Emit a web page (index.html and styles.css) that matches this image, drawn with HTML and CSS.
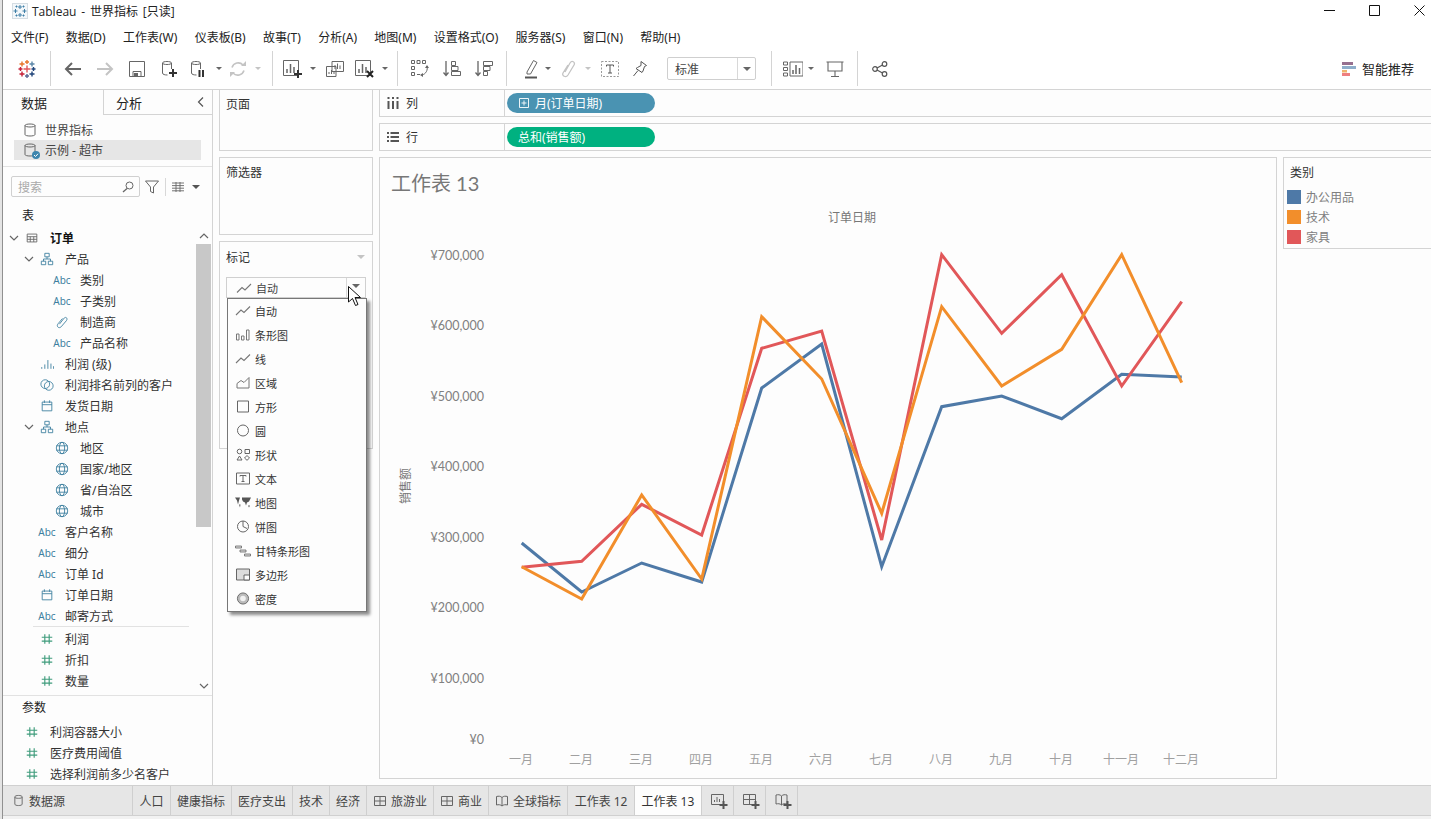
FILE: index.html
```html
<!DOCTYPE html>
<html lang="zh-CN">
<head>
  <meta charset="UTF-8">
  <title>Tableau - 世界指标 [只读]</title>
  <link rel="stylesheet" href="styles.css">
</head>
<body>
<svg class="defs" aria-hidden="true">
  <symbol id="db" viewBox="0 0 16 16"><path d="M3 3.5C3 1.5 13 1.5 13 3.5V12.5C13 14.5 3 14.5 3 12.5ZM3 3.5C3 5.5 13 5.5 13 3.5" fill="none" stroke="currentColor"/></symbol>
  <symbol id="hier" viewBox="0 0 16 16"><path d="M5.5 1.5h5v4h-5zM1.5 10.5h5v4h-5zM9.5 10.5h5v4h-5zM8 5.5v2.5M4 10.500v-2.500h8v2.500" fill="none" stroke="#3d7f9f"/></symbol>
  <symbol id="clip" viewBox="0 0 16 16"><path d="M5 10.500L10.500 3.500C12.500 1.500 15 4 13 6.500L7 13.500C4.500 16 1 13 3.500 10L8.500 4" fill="none" stroke="#3d7f9f"/></symbol>
  <symbol id="cal" viewBox="0 0 16 16"><path d="M2.500 3.500h11v10h-11zM2.500 6.500h11M5 1.500v3M11 1.500v3" fill="none" stroke="#3d7f9f"/></symbol>
  <symbol id="globe" viewBox="0 0 16 16"><g fill="none" stroke="#3d7f9f"><circle cx="8" cy="8" r="6.500"/><ellipse cx="8" cy="8" rx="3" ry="6.500"/><path d="M1.500 5.500h13M1.500 10.500h13"/></g></symbol>
  <symbol id="hash" viewBox="0 0 16 16"><path d="M5.500 2.500v11M10.500 2.500v11M2 6h12M2 10.500h12" fill="none" stroke="#3f9c7c" stroke-width="1.300"/></symbol>
  <symbol id="bars" viewBox="0 0 16 16"><path d="M2 13.500v-2M5.500 13.500v-5M9 13.500v-10M12.500 13.500v-6M15.500 13.500v-3" fill="none" stroke="#3d7f9f"/></symbol>
  <symbol id="sets" viewBox="0 0 16 16"><g fill="none" stroke="#3d7f9f"><circle cx="6" cy="7" r="5"/><circle cx="10" cy="9" r="5"/></g></symbol>
  <symbol id="chev" viewBox="0 0 12 12"><path d="M2 4l4 4 4-4" fill="none" stroke="#666" stroke-width="1.200"/></symbol>
  <symbol id="table" viewBox="0 0 16 16"><path d="M2.500 3.500h11v9h-11zM2.500 6.500h11M2.500 9.500h11M6 6.500v6M10 6.500v6" fill="none" stroke="#666"/></symbol>
  <symbol id="grid" viewBox="0 0 14 14"><path d="M1.500 2.500h11v9h-11zM7 2.500v9M1.500 7h11" fill="none" stroke="#666"/></symbol>
  <symbol id="book" viewBox="0 0 14 14"><path d="M7 3.500C5.500 2 3.500 2 1.500 2.500V11C3.500 10.500 5.500 10.500 7 12C8.500 10.500 10.500 10.500 12.500 11V2.500C10.500 2 8.500 2 7 3.500ZM7 3.500V12" fill="none" stroke="#666"/></symbol>
  <symbol id="line" viewBox="0 0 16 12"><path d="M1 10.500L6 5.500L9 8L15 2" fill="none" stroke="#777" stroke-width="1.100"/></symbol>
</svg>

<div class="window">
  <div class="titlebar">
    <svg class="app-logo" viewBox="0 0 16 16"><rect x="0.500" y="0.500" width="15" height="15" fill="#f3f7fa" stroke="#d5dde3"/><path d="M8 2v4M6 4h4M8 10v4M6 12h4M3.500 6v4M1.500 8h4M12.500 6v4M10.500 8h4M4.500 2.500v2M3.500 3.500h2M11.500 2.500v2M10.500 3.500h2M4.500 11.500v2M3.500 12.500h2M11.500 11.500v2M10.500 12.500h2" stroke="#3f7fa6"/></svg>
    <span class="app-title">Tableau - 世界指标 [只读]</span>
    <div class="win-ctrl">
      <svg viewBox="0 0 11 11"><path d="M0 5.500h11" stroke="#111"/></svg>
      <svg viewBox="0 0 11 11"><path d="M.5.500h10v10H.5z" fill="none" stroke="#111"/></svg>
      <svg viewBox="0 0 11 11"><path d="M.5.500l10 10M10.500.500l-10 10" stroke="#111"/></svg>
    </div>
  </div>

  <div class="menubar">
    <span>文件(F)</span><span>数据(D)</span><span>工作表(W)</span><span>仪表板(B)</span><span>故事(T)</span><span>分析(A)</span><span>地图(M)</span><span>设置格式(O)</span><span>服务器(S)</span><span>窗口(N)</span><span>帮助(H)</span>
  </div>

  <div class="toolbar">
    <div class="tool logo w24">
      <svg viewBox="0 0 18 18" width="18" height="18"><g stroke-width="1.400"><path d="M4 1.500v5M1.500 4h5" stroke="#e8762b"/><path d="M9 0v4M7 2h4" stroke="#e8762b"/><path d="M14 1.500v5M11.500 4h5" stroke="#5b87a8"/><path d="M2.500 7v4M.5 9h4" stroke="#c72037"/><path d="M9 5.500v7M5.500 9h7" stroke="#e15759"/><path d="M15.500 7v4M13.500 9h4" stroke="#1f447a"/><path d="M4 11.500v5M1.500 14h5" stroke="#c72037"/><path d="M9 14v4M7 16h4" stroke="#5b6591"/><path d="M14 11.500v5M11.500 14h5" stroke="#1f447a"/></g></svg>
    </div>
    <i class="sep"></i>
    <div class="tool w32"><svg viewBox="0 0 18 16" width="18" height="16"><path d="M17 8H2M8 2L2 8l6 6" fill="none" stroke="#666" stroke-width="2"/></svg></div>
    <div class="tool w32"><svg viewBox="0 0 18 16" width="18" height="16"><path d="M1 8h15M10 2l6 6-6 6" fill="none" stroke="#c4c4c4" stroke-width="2"/></svg></div>
    <div class="tool w32"><svg viewBox="0 0 16 16" width="16" height="16"><path d="M.5.500h15v15H.5zM4 15.500V10.500h8v5" fill="none" stroke="#666"/><path d="M5 12h4v3H5z" fill="#666"/></svg></div>
    <div class="tool w31"><svg viewBox="0 0 16 18" width="16" height="18"><path d="M1.500 3C1.500 1 10.500 1 10.500 3V9M1.500 3V13C1.500 14.500 4 15 6.500 15M1.500 3C1.500 5 10.500 5 10.500 3" fill="none" stroke="#666"/><path d="M12 9v8M8 13h8" stroke="#333" stroke-width="2"/></svg></div>
    <div class="tool w28"><svg viewBox="0 0 16 18" width="16" height="18"><path d="M1.500 3C1.500 1 10.500 1 10.500 3V9M1.500 3V13C1.500 14.500 4 15 6.500 15M1.500 3C1.500 5 10.500 5 10.500 3" fill="none" stroke="#666"/><path d="M9.500 10v7M13 10v7" stroke="#333" stroke-width="2"/></svg></div>
    <div class="caret-box w14"><i class="caret"></i></div>
    <div class="tool w24"><svg viewBox="0 0 18 18" width="18" height="18"><path d="M3 7.500A6.500 6.500 0 0 1 14 5M15 10.500A6.500 6.500 0 0 1 4 13" fill="none" stroke="#c4c4c4" stroke-width="1.600"/><path d="M12 6h5V1zM6 12H1v5z" fill="#c4c4c4"/></svg></div>
    <div class="caret-box w16"><i class="caret off"></i></div>
    <i class="sep"></i>
    <div class="tool w28"><svg viewBox="0 0 20 18" width="20" height="18"><path d="M.5.500h15v15H.5z" fill="none" stroke="#666"/><path d="M4 13V9M7.500 13V4M11 13V7" stroke="#666" stroke-width="1.500"/><path d="M15 10v8M11 14h8" stroke="#333" stroke-width="2"/></svg></div>
    <div class="caret-box w12"><i class="caret"></i></div>
    <div class="tool w32"><svg viewBox="0 0 18 16" width="18" height="16"><path d="M6 .500h11.500v10H6zM.5 5.500H10v10H.5z" fill="#fdfdfd" stroke="#666"/><path d="M9 8V4M11.500 8V2.500M14 8V4.500M3 13v-2M5.500 13V9M8 13v-2" stroke="#666"/></svg></div>
    <div class="tool w28"><svg viewBox="0 0 20 18" width="20" height="18"><path d="M.5.500h15v15H.5z" fill="none" stroke="#666"/><path d="M4 13V9M7.500 13V4M11 13V7" stroke="#666" stroke-width="1.500"/><path d="M12 11l6 6M18 11l-6 6" stroke="#222" stroke-width="2"/></svg></div>
    <div class="caret-box w12"><i class="caret"></i></div>
    <i class="sep"></i>
    <div class="tool w32"><svg viewBox="0 0 18 18" width="18" height="18"><path d="M.5.500h3v3h-3zM6 .500h3v3H6zM11.500.500h3v3h-3zM.5 6.500h3v3h-3zM.5 12.500h3v3h-3zM6 14.500h3" fill="none" stroke="#666"/><path d="M16 6c1 4-1 8-5 9" fill="none" stroke="#666"/><path d="M14 8l2-3 2 3zM12 13l-3 2 3 2z" fill="#666"/></svg></div>
    <div class="tool w32"><svg viewBox="0 0 18 18" width="18" height="18"><path d="M3 1v14M.5 12.500L3 15.500l2.500-3" fill="none" stroke="#666" stroke-width="1.300"/><path d="M8.500 1.500h4v4h-4zM8.500 6.500h6.500v4H8.500zM8.500 11.500h9v4h-9z" fill="none" stroke="#666"/></svg></div>
    <div class="tool w32"><svg viewBox="0 0 18 18" width="18" height="18"><path d="M3 1v14M.5 12.500L3 15.500l2.500-3" fill="none" stroke="#666" stroke-width="1.300"/><path d="M8.500 1.500h9v4h-9zM8.500 6.500h6.500v4H8.500zM8.500 11.500h4v4h-4z" fill="none" stroke="#666"/></svg></div>
    <i class="sep"></i>
    <div class="tool w24 hl"><svg viewBox="0 0 14 20" width="14" height="20"><path d="M3 13L9.500 1.500 13 3.500 6.500 15H3z" fill="none" stroke="#666"/><path d="M1 18.500h12" stroke="#555" stroke-width="2"/></svg></div>
    <div class="caret-box w10"><i class="caret"></i></div>
    <div class="tool w30"><svg viewBox="0 0 16 18" width="16" height="18"><path d="M5 12L10 3C12 0 15.500 2 14 5L8 15C6 18 1.500 16 3 13L8 5" fill="none" stroke="#c4c4c4" stroke-width="1.300"/></svg></div>
    <div class="caret-box w10"><i class="caret off"></i></div>
    <div class="tool w34"><svg viewBox="0 0 18 16" width="18" height="16"><path d="M.5.500h17v15H.5z" fill="none" stroke="#999" stroke-dasharray="2 1.500"/><path d="M5.500 5.500V4h7v1.500M9 4v8M7 12h4" fill="none" stroke="#555"/></svg></div>
    <div class="tool w26"><svg viewBox="0 0 14 16" width="14" height="16"><path d="M8 .500l5.500 4-2 1-1.500 4.500-1 1.500L3 7.500 4.500 6.500 8 4.500zM5 9.500L.5 15" fill="none" stroke="#555"/></svg></div>
    <div class="combo"><span>标准</span><b><i class="caret"></i></b></div>
    <i class="sep"></i>
    <div class="tool w20 show"><svg viewBox="0 0 20 16" width="20" height="16"><path d="M.5 1h4v3h-4zM.5 6.500h4v3h-4zM.5 12h4v3h-4zM7 1h13v14H7z" fill="none" stroke="#666"/><path d="M10 13V9M13 13V4M16.500 13V7" stroke="#666" stroke-width="1.500"/></svg></div>
    <div class="caret-box w16"><i class="caret"></i></div>
    <div class="tool w32"><svg viewBox="0 0 18 16" width="18" height="16"><path d="M.5 1h17M2 1v9h14V1M9 10v5M5 15.500h8" fill="none" stroke="#666" stroke-width="1.100"/></svg></div>
    <i class="sep"></i>
    <div class="tool w20 share"><svg viewBox="0 0 16 16" width="16" height="16"><g fill="none" stroke="#555" stroke-width="1.200"><circle cx="3" cy="8" r="2.300"/><circle cx="12.500" cy="3" r="2.300"/><circle cx="12.500" cy="13" r="2.300"/><path d="M5 7l5.500-3M5 9l5.500 3"/></g></svg></div>
    <div class="recommend">
      <svg viewBox="0 0 14 14" width="14" height="14"><path d="M0 0h11v3H0z" fill="#96708f"/><path d="M0 4h14v3H0z" fill="#8eaecb"/><path d="M0 8h5v2.500H0z" fill="#f0b36b"/><path d="M0 11h8v3H0z" fill="#ee7f80"/></svg>
      <span>智能推荐</span>
    </div>
  </div>

  <div class="main">
    <aside class="sidebar">
      <div class="side-tabs">
        <div class="side-tab on">数据</div>
        <div class="side-tab">分析<svg class="collapse" viewBox="0 0 8 12"><path d="M6 1.500L1.500 6 6 10.500" fill="none" stroke="#555" stroke-width="1.200"/></svg></div>
      </div>
      <div class="sources">
        <div class="source"><svg class="ico16 grey"><use href="#db"/></svg>世界指标</div>
        <div class="source on">
          <span class="db-wrap"><svg class="ico16 grey"><use href="#db"/></svg><svg class="tick" viewBox="0 0 8 8"><circle cx="4" cy="4" r="4" fill="#3d85ad"/><path d="M2 4l1.500 1.500L6 2.800" fill="none" stroke="#fff"/></svg></span>示例 - 超市
        </div>
      </div>
      <div class="search-row">
        <div class="search">
          <span>搜索</span>
          <svg viewBox="0 0 12 12" width="12" height="12"><circle cx="7.500" cy="4.500" r="3.500" fill="none" stroke="#666"/><path d="M5 7.500L1 11" stroke="#666" stroke-width="1.300"/></svg>
        </div>
        <svg class="funnel" viewBox="0 0 14 14" width="14" height="14"><path d="M.5 1h13L8.500 7v6L5.500 11.500V7z" fill="none" stroke="#666"/></svg>
        <i class="mini-sep"></i>
        <svg class="lines" viewBox="0 0 12 10" width="12" height="10"><path d="M0 1h12M0 3.600h12M0 6.200h12M0 8.800h12M4 0v10M8 0v10" stroke="#666" stroke-width=".9"/></svg>
        <i class="caret dark"></i>
      </div>
      <div class="heading">表</div>

      <div class="fields">
        <div class="row"><svg class="chev"><use href="#chev"/></svg><svg class="ico"><use href="#table"/></svg><b>订单</b></div>
        <div class="row l1"><svg class="chev"><use href="#chev"/></svg><svg class="ico"><use href="#hier"/></svg>产品</div>
        <div class="row l2"><span class="slot"></span><span class="abc">Abc</span>类别</div>
        <div class="row l2"><span class="slot"></span><span class="abc">Abc</span>子类别</div>
        <div class="row l2"><span class="slot"></span><svg class="ico"><use href="#clip"/></svg>制造商</div>
        <div class="row l2"><span class="slot"></span><span class="abc">Abc</span>产品名称</div>
        <div class="row l1"><span class="slot"></span><svg class="ico"><use href="#bars"/></svg>利润 (级)</div>
        <div class="row l1"><span class="slot"></span><svg class="ico"><use href="#sets"/></svg>利润排名前列的客户</div>
        <div class="row l1"><span class="slot"></span><svg class="ico"><use href="#cal"/></svg>发货日期</div>
        <div class="row l1"><svg class="chev"><use href="#chev"/></svg><svg class="ico"><use href="#hier"/></svg>地点</div>
        <div class="row l2"><span class="slot"></span><svg class="ico"><use href="#globe"/></svg>地区</div>
        <div class="row l2"><span class="slot"></span><svg class="ico"><use href="#globe"/></svg>国家/地区</div>
        <div class="row l2"><span class="slot"></span><svg class="ico"><use href="#globe"/></svg>省/自治区</div>
        <div class="row l2"><span class="slot"></span><svg class="ico"><use href="#globe"/></svg>城市</div>
        <div class="row l1"><span class="slot"></span><span class="abc">Abc</span>客户名称</div>
        <div class="row l1"><span class="slot"></span><span class="abc">Abc</span>细分</div>
        <div class="row l1"><span class="slot"></span><span class="abc">Abc</span>订单 Id</div>
        <div class="row l1"><span class="slot"></span><svg class="ico"><use href="#cal"/></svg>订单日期</div>
        <div class="row l1"><span class="slot"></span><span class="abc">Abc</span>邮寄方式</div>
        <div class="field-sep"></div>
        <div class="row l1"><span class="slot"></span><svg class="ico"><use href="#hash"/></svg>利润</div>
        <div class="row l1"><span class="slot"></span><svg class="ico"><use href="#hash"/></svg>折扣</div>
        <div class="row l1"><span class="slot"></span><svg class="ico"><use href="#hash"/></svg>数量</div>
        <div class="scroll">
          <svg class="chev up"><use href="#chev"/></svg>
          <div class="track"><div class="thumb"></div></div>
          <svg class="chev"><use href="#chev"/></svg>
        </div>
      </div>

      <div class="params">
        <div class="params-head">参数</div>
        <div class="row"><span class="slot"></span><svg class="ico"><use href="#hash"/></svg>利润容器大小</div>
        <div class="row"><span class="slot"></span><svg class="ico"><use href="#hash"/></svg>医疗费用阈值</div>
        <div class="row"><span class="slot"></span><svg class="ico"><use href="#hash"/></svg>选择利润前多少名客户</div>
      </div>
    </aside>

    <div class="cards">
      <div class="card pages">页面</div>
      <div class="card filters">筛选器</div>
      <div class="card marks">
        <div class="marks-head">标记<i class="caret off"></i></div>
        <div class="mark-select">
          <svg class="mark-ico"><use href="#line"/></svg><span>自动</span><b><i class="caret"></i></b>
        </div>
        <div class="mark-menu">
          <div class="mark-item"><svg class="mark-ico"><use href="#line"/></svg>自动</div>
          <div class="mark-item"><svg class="mark-ico" viewBox="0 0 16 12"><path d="M1.500 5.500h2.500v6H1.500zM6.500 7.500h2.500v4H6.500zM11.500 1.500h2.500v10h-2.500z" fill="none" stroke="#777"/></svg>条形图</div>
          <div class="mark-item"><svg class="mark-ico"><use href="#line"/></svg>线</div>
          <div class="mark-item"><svg class="mark-ico" viewBox="0 0 16 12"><path d="M2 11.500V7L6 4L9 6L14 1V11.500Z" fill="none" stroke="#777"/></svg>区域</div>
          <div class="mark-item"><svg class="mark-ico" viewBox="0 0 16 12"><path d="M2.500.500h11v11h-11z" fill="none" stroke="#666"/></svg>方形</div>
          <div class="mark-item"><svg class="mark-ico" viewBox="0 0 16 12"><circle cx="8" cy="6" r="5.500" fill="none" stroke="#666"/></svg>圆</div>
          <div class="mark-item"><svg class="mark-ico" viewBox="0 0 16 12"><g fill="none" stroke="#666"><circle cx="4.500" cy="3" r="2.300"/><path d="M10 1h4.500v4H10zM4.500 7.500L7 11.500H2zM12 7l2.500 2.500L12 11.800 9.500 9.500z"/></g></svg>形状</div>
          <div class="mark-item"><svg class="mark-ico" viewBox="0 0 16 12"><path d="M1.500.500h13v11h-13z" fill="none" stroke="#666"/><path d="M5 4V3h6v1M8 3v6M6.500 9h3" fill="none" stroke="#666"/></svg>文本</div>
          <div class="mark-item"><svg class="mark-ico" viewBox="0 0 16 12"><path d="M0 1h5L4 4 3 8 2 4zM7 1h9l-2 4-2 1-1 3-1-3-2-1-1-2z" fill="#555"/><path d="M4 8l1 3 .5-3zM13 9h2l-1 2z" fill="#555"/></svg>地图</div>
          <div class="mark-item"><svg class="mark-ico" viewBox="0 0 16 12"><circle cx="8" cy="6" r="5.500" fill="none" stroke="#666"/><path d="M8 6V.500M8 6l4 2" fill="none" stroke="#666"/></svg>饼图</div>
          <div class="mark-item"><svg class="mark-ico" viewBox="0 0 16 12"><path d="M.5 1.500h6v2h-6zM5 5.500h6v2H5zM9.500 9.500h6v2h-6z" fill="#ddd" stroke="#666" stroke-width=".8"/></svg>甘特条形图</div>
          <div class="mark-item"><svg class="mark-ico" viewBox="0 0 16 12"><path d="M1.500.500h13v11h-13z" fill="#ddd" stroke="#666"/><path d="M9 11.500V6.500h5.500v5z" fill="#fdfdfd" stroke="#666"/></svg>多边形</div>
          <div class="mark-item"><svg class="mark-ico" viewBox="0 0 16 14"><circle cx="8" cy="7" r="6" fill="#bbb" stroke="#666"/><circle cx="8" cy="7" r="3" fill="#f1f1f1"/></svg>密度</div>
        </div>
        <svg class="cursor" viewBox="0 0 14 21" width="14" height="21"><path d="M.5.500V16L4.500 12.500 7.500 19.500 10 18.500 7 11.500 12.500 11.500Z" fill="#fff" stroke="#111"/></svg>
      </div>
    </div>

    <div class="work">
      <div class="shelf first">
        <div class="shelf-label"><svg viewBox="0 0 12 12" width="12" height="12"><path d="M1.500 4v8M6 4v8M10.500 4v8" stroke="#555" stroke-width="2"/><path d="M1.500 0v2M6 0v2M10.500 0v2" stroke="#555" stroke-width="2"/></svg><span>列</span></div>
        <div class="pill blue"><svg viewBox="0 0 10 10" width="10" height="10"><path d="M.5.500h9v9h-9zM5 2.500v5M2.500 5h5" fill="none" stroke="#fff" stroke-width=".9"/></svg>月(订单日期)</div>
      </div>
      <div class="shelf">
        <div class="shelf-label"><svg viewBox="0 0 12 12" width="12" height="12"><path d="M0 2h2M3.500 2H12M0 6h2M3.500 6H12M0 10h2M3.500 10H12" stroke="#555" stroke-width="1.800"/></svg><span>行</span></div>
        <div class="pill green">总和(销售额)</div>
      </div>

      <div class="view">
        <div class="sheet">
          <h2 class="sheet-title">工作表 13</h2>
          <svg class="chart" viewBox="0 0 896 577" width="896" height="577">
            <text class="ax-title" x="472" y="22" text-anchor="middle">订单日期</text>
            <text class="ax-title" transform="translate(30 286) rotate(-90)" text-anchor="middle">销售额</text>
            <g class="ax-y" text-anchor="end">
              <text x="104" y="60">¥700,000</text>
              <text x="104" y="130">¥600,000</text>
              <text x="104" y="201">¥500,000</text>
              <text x="104" y="271">¥400,000</text>
              <text x="104" y="342">¥300,000</text>
              <text x="104" y="412">¥200,000</text>
              <text x="104" y="483">¥100,000</text>
              <text x="104" y="544">¥0</text>
            </g>
            <g class="ax-x" text-anchor="middle">
              <text x="141" y="564">一月</text><text x="201" y="564">二月</text><text x="261" y="564">三月</text><text x="321" y="564">四月</text><text x="381" y="564">五月</text><text x="441" y="564">六月</text><text x="501" y="564">七月</text><text x="561" y="564">八月</text><text x="621" y="564">九月</text><text x="681" y="564">十月</text><text x="741" y="564">十一月</text><text x="801" y="564">十二月</text>
            </g>
            <polyline class="s" stroke="#4e79a7" points="141.700,343 201.700,392 261.700,363 321.700,382 381.700,188 441.700,144 501.700,366.700 561.700,206.700 621.700,196 681.700,218.700 741.700,174.300 801.700,177"/>
            <polyline class="s" stroke="#e15759" points="141.700,367.300 201.700,361.300 261.700,304.300 321.700,335 381.700,148.300 441.700,131 501.700,340 561.700,54.700 621.700,133.300 681.700,74.700 741.700,186 801.700,101.700"/>
            <polyline class="s" stroke="#f28e2b" points="141.700,366.700 201.700,399 261.700,295 321.700,379 381.700,116.700 441.700,179 501.700,313.300 561.700,106.700 621.700,186 681.700,149.300 741.700,54.700 801.700,182.700"/>
          </svg>
        </div>
        <div class="legend">
          <div class="legend-title">类别</div>
          <div class="legend-item"><i class="swatch c1"></i>办公用品</div>
          <div class="legend-item"><i class="swatch c2"></i>技术</div>
          <div class="legend-item"><i class="swatch c3"></i>家具</div>
        </div>
      </div>
    </div>
  </div>

  <div class="tabs">
    <div class="tab src"><svg viewBox="0 0 12 14" width="11" height="13"><path d="M2 3C2 1 10 1 10 3V11C10 13 2 13 2 11ZM2 3.500C2 5 10 5 10 3.500" fill="none" stroke="#666"/></svg>数据源</div>
    <div class="tab wide">人口</div>
    <div class="tab">健康指标</div>
    <div class="tab">医疗支出</div>
    <div class="tab">技术</div>
    <div class="tab">经济</div>
    <div class="tab"><svg class="tab-ico"><use href="#grid"/></svg>旅游业</div>
    <div class="tab"><svg class="tab-ico"><use href="#grid"/></svg>商业</div>
    <div class="tab"><svg class="tab-ico"><use href="#book"/></svg>全球指标</div>
    <div class="tab wide">工作表 12</div>
    <div class="tab wide on">工作表 13</div>
    <div class="tab add"><svg viewBox="0 0 18 16" width="18" height="16"><path d="M.5 1.500h12v10H.5z" fill="none" stroke="#666"/><path d="M3.500 9V7M6 9V4M8.500 9V6" stroke="#666"/><path d="M12.500 8v8M8.500 12h8" stroke="#555" stroke-width="2"/></svg></div>
    <div class="tab add"><svg viewBox="0 0 18 16" width="18" height="16"><path d="M.5 1.500h12v10H.5zM6.500 1.500v10M.5 6.500h12" fill="none" stroke="#666"/><path d="M12.500 8v8M8.500 12h8" stroke="#555" stroke-width="2"/></svg></div>
    <div class="tab add"><svg viewBox="0 0 18 16" width="18" height="16"><path d="M6.500 3C5 1.500 3 1.500 1 2V11C3 10.500 5 10.500 6.500 12C8 10.500 10 10.500 12 11V2C10 1.500 8 1.500 6.500 3ZM6.500 3V12" fill="none" stroke="#666"/><path d="M12.500 8v8M8.500 12h8" stroke="#555" stroke-width="2"/></svg></div>
  </div>
  <div class="statusbar"></div>
</div>
</body>
</html>
```

FILE: styles.css
```css
* {
  box-sizing: border-box;
}
html, body {
  margin: 0;
  padding: 0;
  height: 100%;
  overflow: hidden;
}
body {
  font-family: "Noto Sans", "Noto Sans CJK SC", sans-serif;
  font-size: 12px;
  color: #333;
  background: #e4e4e4;
  border-left: 2px solid #e4e4e4;
}
i {
  display: block;
  font-style: normal;
}
.defs {
  position: absolute;
  width: 0;
  height: 0;
}
.window {
  height: 819px;
  display: flex;
  flex-direction: column;
  background: #fdfdfd;
  border-left: 1px solid #909090;
}

/* title + menu */
.titlebar {
  height: 24px;
  flex: none;
  display: flex;
  align-items: center;
  padding: 0 6px 3px 9px;
  background: #fff;
}
.app-logo {
  width: 16px;
  height: 16px;
}
.app-title {
  margin-left: 4px;
  color: #222;
  word-spacing: 1.7px;
  font-family: "Open Sans", "Noto Sans CJK SC", sans-serif;
}
.win-ctrl {
  margin-left: auto;
  display: flex;
  gap: 34px;
}
.win-ctrl svg {
  width: 11px;
  height: 11px;
}
.menubar {
  height: 26px;
  flex: none;
  display: flex;
  align-items: center;
  gap: 17.3px;
  padding-left: 8px;
  background: #fff;
  color: #222;
}

/* toolbar */
.toolbar {
  height: 40px;
  flex: none;
  display: flex;
  align-items: center;
  padding: 0 0 2px 12px;
  border-bottom: 1px solid #d4d4d4;
  background: #fff;
}
.tool, .caret-box {
  height: 24px;
  flex: none;
  display: flex;
  align-items: center;
  justify-content: center;
}
.w10 { width: 10px; }
.w12 { width: 12px; }
.w14 { width: 14px; }
.w16 { width: 16px; }
.w20 { width: 20px; }
.w24 { width: 24px; }
.w26 { width: 26px; }
.w28 { width: 28px; }
.w30 { width: 30px; }
.w31 { width: 31px; }
.w32 { width: 32px; }
.w34 { width: 34px; }
.logo { margin-right: 5px; }
.hl { margin-left: 6px; }
.show { margin-left: 5px; }
.share { margin-left: 6px; }
.sep {
  width: 1px;
  height: 35px;
  flex: none;
  margin: 0 6px;
  background: #d4d4d4;
}
.caret {
  width: 0;
  height: 0;
  border-left: 4px solid transparent;
  border-right: 4px solid transparent;
  border-top: 4px solid #666;
}
.caret-box .caret {
  border-left-width: 3px;
  border-right-width: 3px;
  border-top-width: 3px;
}
.caret.off {
  border-top-color: #c4c4c4;
}
.caret.dark {
  border-top-color: #555;
}
.combo {
  width: 89px;
  height: 23px;
  margin: 0 9px 0 14px;
  flex: none;
  display: flex;
  align-items: center;
  border: 1px solid #cfcfcf;
  border-radius: 2px;
}
.combo span {
  flex: 1;
  padding-left: 7px;
  color: #444;
}
.combo b {
  width: 18px;
  height: 100%;
  display: flex;
  align-items: center;
  justify-content: center;
  border-left: 1px solid #d8d8d8;
}
.recommend {
  margin-left: auto;
  margin-right: 17px;
  display: flex;
  align-items: center;
  gap: 6px;
  font-size: 13px;
  color: #222;
}

/* main area */
.main {
  flex: 1;
  min-height: 0;
  display: flex;
}
.sidebar {
  width: 210px;
  flex: none;
  display: flex;
  flex-direction: column;
  border-right: 1px solid #d4d4d4;
}
.side-tabs {
  height: 25px;
  flex: none;
  display: flex;
}
.side-tab {
  position: relative;
  flex: 1;
  padding: 3px 0 0 12px;
  font-size: 13px;
  color: #222;
  border-left: 1px solid #d4d4d4;
  border-bottom: 1px solid #d4d4d4;
}
.side-tab.on {
  flex: none;
  width: 100px;
  padding-left: 18px;
  border: none;
}
.collapse {
  position: absolute;
  right: 7px;
  top: 6px;
  width: 8px;
  height: 12px;
}
.sources {
  padding: 5px 11px 6px 11px;
  border-bottom: 1px solid #e2e2e2;
}
.source {
  height: 20px;
  display: flex;
  align-items: center;
  gap: 7px;
  padding-left: 8px;
  color: #444;
}
.source.on {
  background: #e6e6e6;
}
.ico16 {
  width: 16px;
  height: 16px;
  flex: none;
}
.grey {
  color: #666;
}
.db-wrap {
  position: relative;
  height: 16px;
}
.tick {
  position: absolute;
  right: -2px;
  bottom: -1px;
  width: 8px;
  height: 8px;
}
.search-row {
  height: 31px;
  flex: none;
  display: flex;
  align-items: center;
  padding: 9px 0 1px 8px;
}
.search {
  width: 129px;
  height: 21px;
  display: flex;
  align-items: center;
  justify-content: space-between;
  padding: 0 5px 0 6px;
  border: 1px solid #d0d0d0;
  border-radius: 2px;
  color: #aaa;
}
.funnel {
  margin-left: 5px;
}
.mini-sep {
  width: 1px;
  height: 18px;
  margin: 0 6px;
  background: #d8d8d8;
}
.lines {
  margin-right: 8px;
}
.heading {
  height: 20px;
  margin-top: 8px;
  padding-left: 19px;
  line-height: 20px;
  color: #222;
}
.fields {
  position: relative;
  height: 469px;
  flex: none;
  margin-top: 1px;
  border-bottom: 1px solid #e2e2e2;
}
.row {
  height: 21px;
  display: flex;
  align-items: center;
  padding-left: 5px;
  color: #333;
  white-space: nowrap;
}
.row b {
  color: #111;
}
.l1 { padding-left: 20px; }
.l2 { padding-left: 35px; }
.slot, .chev {
  width: 12px;
  height: 12px;
  flex: none;
}
.ico {
  width: 14px;
  height: 14px;
  flex: none;
  margin: 0 11px 0 5px;
}
.abc {
  width: 24px;
  margin-right: 6px;
  flex: none;
  text-align: center;
  font-size: 10px;
  color: #3d7f9f;
}
.field-sep {
  height: 1px;
  margin: 0 23px 1px 30px;
  background: #e2e2e2;
}
.scroll {
  position: absolute;
  top: 3px;
  right: 1px;
  bottom: 3px;
  width: 15px;
  display: flex;
  flex-direction: column;
  align-items: center;
}
.up {
  transform: rotate(180deg);
}
.track {
  flex: 1;
  width: 15px;
  padding-top: 2px;
}
.thumb {
  height: 283px;
  background: #c8c8c8;
}
.params {
  flex: 1;
}
.params-head {
  height: 25px;
  padding-left: 19px;
  line-height: 24px;
  color: #222;
}

/* pages / filters / marks */
.cards {
  width: 154px;
  flex: none;
  margin-left: 6px;
  display: flex;
  flex-direction: column;
  gap: 6px;
}
.card {
  padding: 5px 6px;
  border: 1px solid #d4d4d4;
  color: #333;
}
.pages {
  height: 61px;
  border-top: none;
}
.filters {
  height: 78px;
}
.marks {
  position: relative;
  height: 208px;
}
.marks-head {
  display: flex;
  align-items: center;
  justify-content: space-between;
  height: 18px;
  margin-top: 1px;
  padding-right: 1px;
}
.mark-select {
  height: 21px;
  margin-top: 11px;
  width: 140px;
  display: flex;
  align-items: center;
  border: 1px solid #d0d0d0;
}
.mark-select span {
  flex: 1;
  font-size: 11px;
  color: #444;
}
.mark-select b {
  width: 19px;
  height: 100%;
  padding: 6px 0 0 5px;
  border-left: 1px solid #d8d8d8;
}
.mark-ico {
  width: 16px;
  height: 12px;
  flex: none;
  margin: 0 5px 0 8px;
}
.mark-item .mark-ico {
  margin: 0 4px 0 7px;
  height: 13px;
}
.mark-select .mark-ico {
  margin: 0 4px 0 9px;
}
.mark-menu {
  position: absolute;
  left: 7px;
  top: 56px;
  width: 140px;
  padding: 0;
  border: 1px solid #777;
  background: #fdfdfd;
  box-shadow: 3px 3px 3px rgba(0, 0, 0, 0.45);
  z-index: 2;
}
.mark-item {
  height: 24px;
  padding-bottom: 1px;
  display: flex;
  align-items: center;
  font-size: 11px;
  color: #333;
}
.cursor {
  position: absolute;
  left: 128px;
  top: 44px;
  z-index: 3;
}

/* shelves + sheet */
.work {
  flex: 1;
  min-width: 0;
  margin-left: 6px;
  display: flex;
  flex-direction: column;
}
.shelf {
  height: 28px;
  flex: none;
  display: flex;
  align-items: center;
  margin-top: 6px;
  border: 1px solid #d4d4d4;
  border-right: none;
}
.shelf.first {
  height: 27px;
  margin-top: 0;
  border-top: none;
}
.shelf-label {
  width: 125px;
  height: 100%;
  flex: none;
  display: flex;
  align-items: center;
  gap: 7px;
  padding-left: 7px;
  border-right: 1px solid #d4d4d4;
  color: #333;
}
.pill {
  width: 148px;
  height: 20px;
  margin-left: 2px;
  display: flex;
  align-items: center;
  border-radius: 10px;
  color: #fff;
  white-space: nowrap;
}
.pill.blue {
  gap: 6px;
  padding-left: 12px;
  background: #4a93b2;
}
.pill.green {
  padding-left: 11px;
  background: #00b180;
}
.view {
  flex: 1;
  min-height: 0;
  display: flex;
  gap: 6px;
  margin: 6px 0;
}
.sheet {
  width: 898px;
  flex: none;
  border: 1px solid #d4d4d4;
}
.sheet-title {
  height: 42px;
  margin: 0;
  padding: 10px 0 0 11px;
  font-family: Lato, "Noto Sans CJK SC", sans-serif;
  font-size: 20px;
  font-weight: 400;
  line-height: 30px;
  color: #777;
}
.chart {
  display: block;
}
.chart text {
  font-family: Lato, "Noto Sans CJK SC", sans-serif;
}
.ax-title {
  font-size: 12px;
  fill: #777;
}
.ax-y {
  font-size: 12.5px;
  fill: #808080;
}
.ax-x {
  font-size: 12px;
  fill: #a0a0a0;
}
.s {
  fill: none;
  stroke-width: 3;
  stroke-linejoin: miter;
}
.legend {
  flex: 1;
  height: 92px;
  padding: 6px 0 0 3px;
  border: 1px solid #d4d4d4;
  border-right: none;
}
.legend-title {
  height: 20px;
  padding-left: 3px;
  margin-bottom: 3px;
  line-height: 18px;
  color: #333;
}
.legend-item {
  height: 20px;
  display: flex;
  align-items: center;
  gap: 5px;
  color: #808080;
}
.swatch {
  width: 14px;
  height: 14px;
  flex: none;
}
.c1 { background: #4e79a7; }
.c2 { background: #f28e2b; }
.c3 { background: #e15759; }

/* tabs */
.tabs {
  height: 31px;
  flex: none;
  display: flex;
  background: #e6e6e6;
  border-top: 1px solid #d0d0d0;
  border-bottom: 1px solid #d0d0d0;
}
.tab {
  flex: none;
  display: flex;
  align-items: center;
  gap: 4px;
  padding: 0 6px;
  border-right: 1px solid #cfcfcf;
  color: #444;
  white-space: nowrap;
}
.tab.wide {
  padding: 0 6.5px;
}
.tab.src {
  width: 130px;
  gap: 5px;
  padding-left: 10px;
}
.tab.on {
  background: #fdfdfd;
  color: #333;
}
.tab.add {
  width: 32px;
  padding: 0 0 0 9px;
}
.tab-ico {
  width: 14px;
  height: 14px;
  flex: none;
}
.statusbar {
  height: 3px;
  flex: none;
  background: #f2f2f2;
}
```
